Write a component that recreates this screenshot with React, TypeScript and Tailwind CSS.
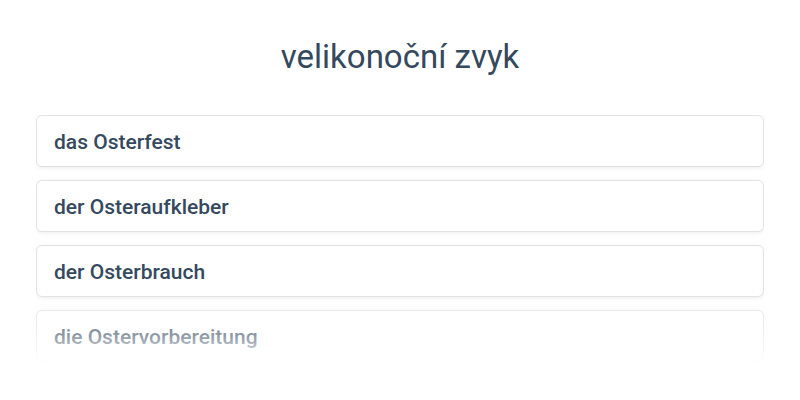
import React from "react";

const items = ["das Osterfest", "der Osteraufkleber", "der Osterbrauch", "die Ostervorbereitung"];

export default function App() {
  return (
    <div className="w-[800px] h-[400px] bg-white overflow-hidden" style={{ fontFamily: "Roboto, 'Noto Sans', sans-serif" }}>
      <h1 className="pt-[36px] text-center text-[33px] leading-[42px] font-normal text-[#34495e]">velikonoční zvyk</h1>
      <div className="relative mt-[37px] mx-[36px] h-[250px] overflow-hidden">
        <div className="flex flex-col gap-[13px]">
          {items.map((t) => (
            <div
              key={t}
              className="h-[52px] shrink-0 flex items-center px-[17px] pt-[3px] rounded-[6px] border border-[#e3e3e3] bg-white shadow-[0_1px_4px_rgba(0,0,0,0.08)] text-[21px] font-medium text-[#34495e]"
            >
              {t}
            </div>
          ))}
        </div>
        <div className="absolute left-0 right-0 bottom-0 h-[58px] bg-gradient-to-b from-white/20 via-white/45 to-white pointer-events-none" />
      </div>
    </div>
  );
}
